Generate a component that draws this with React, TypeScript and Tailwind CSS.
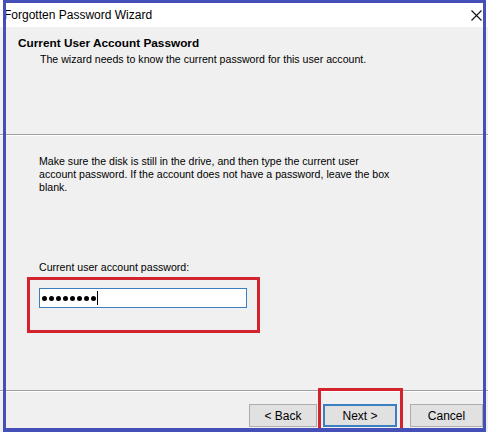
import * as React from "react";

const dlgFont = { fontFamily: '"Liberation Sans", Arial, sans-serif' };

function CloseGlyph() {
  return (
    <svg width="11" height="11" viewBox="0 0 11 11" className="block">
      <path d="M0.5 0.5 L10.5 10.5 M10.5 0.5 L0.5 10.5" stroke="#111" strokeWidth="1.1" fill="none" />
    </svg>
  );
}

function WizardButton({ label, focused, className }: { label: string; focused?: boolean; className?: string }) {
  return (
    <button
      type="button"
      className={`h-[23px] bg-[#e1e1e1] text-[12px] text-black ${
        focused ? "border-2 border-[#3b7fbf]" : "border border-[#adadad]"
      } ${className ?? ""}`}
      style={dlgFont}
    >
      {label}
    </button>
  );
}

export default function App() {
  return (
    <div className="relative h-[432px] w-[488px] overflow-hidden bg-[#f0f0f0] text-black" style={dlgFont}>
      {/* title bar */}
      <div className="flex h-[27px] items-center justify-between bg-white pl-[4px] pr-[6px] pt-[3px]">
        <span className="text-[12px] leading-none">Forgotten Password Wizard</span>
        <CloseGlyph />
      </div>

      {/* header */}
      <div className="h-[107px] pl-[18px] pt-[10px]">
        <p className="text-[11.8px] font-bold leading-[13px]">Current User Account Password</p>
        <p className="mt-[3px] pl-[22px] text-[10.6px] leading-[13px]">
          The wizard needs to know the current password for this user account.
        </p>
      </div>
      <div className="h-px bg-[#a0a0a0]" />
      <div className="h-px bg-white" />

      {/* body */}
      <div className="h-[254px] pl-[39px] pt-[19px]">
        <p className="text-[10.6px] leading-[13px]">
          Make sure the disk is still in the drive, and then type the current user
          <br />
          account password. If the account does not have a password, leave the box
          <br />
          blank.
        </p>
        <p className="mt-[67px] text-[10.6px] leading-[13px]">Current user account password:</p>
        <div className="-ml-[12px] mt-[3px] h-[56px] w-[233px] border-[3px] border-[#d3232c] pl-[9px] pt-[8px]">
          <div className="flex h-[20px] w-[208px] items-center border border-[#3b7fbf] bg-white pl-[2px]">
            <div className="flex gap-[2px]">
              {Array.from({ length: 8 }).map((_, i) => (
                <span key={i} className="h-[5px] w-[5px] rounded-full bg-black" />
              ))}
            </div>
            <span className="ml-[1px] h-[14px] w-px bg-black" />
          </div>
        </div>
      </div>
      <div className="h-px bg-[#a0a0a0]" />
      <div className="h-px bg-white" />

      {/* buttons */}
      <div className="flex items-start pl-[249px] pt-[12px]">
        <WizardButton label="< Back" className="w-[68px]" />
        <span className="-mb-[4px] -mt-[16px] ml-[1px] border-[3px] border-[#d3232c] pb-[1px] pl-[2px] pr-[3px] pt-[13px]">
          <WizardButton label="Next >" focused className="block w-[74px]" />
        </span>
        <WizardButton label="Cancel" className="ml-[7px] w-[73px]" />
      </div>

      {/* screenshot frame */}
      <div className="pointer-events-none absolute bottom-0 left-[3px] right-[2px] top-0 border-x-[3px] border-b-[4px] border-t-[3px] border-[#4450b8]" />
    </div>
  );
}
